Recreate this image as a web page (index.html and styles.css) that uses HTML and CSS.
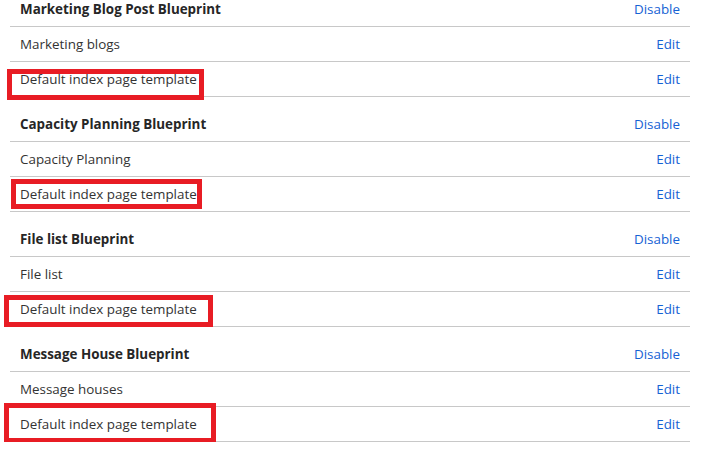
FILE: index.html
```html
<!DOCTYPE html>
<html>
<head>
<meta charset="utf-8">
<link rel="stylesheet" href="styles.css">
</head>
<body>
<div class="list">
  <div class="row head"><span class="title">Marketing Blog Post Blueprint</span><a class="link">Disable</a></div>
  <div class="row"><span class="label">Marketing blogs</span><a class="link">Edit</a></div>
  <div class="row"><span class="label">Default index page template</span><a class="link">Edit</a><span class="mark mark-1"></span></div>

  <div class="row head"><span class="title">Capacity Planning Blueprint</span><a class="link">Disable</a></div>
  <div class="row"><span class="label">Capacity Planning</span><a class="link">Edit</a></div>
  <div class="row"><span class="label">Default index page template</span><a class="link">Edit</a><span class="mark mark-2"></span></div>

  <div class="row head"><span class="title">File list Blueprint</span><a class="link">Disable</a></div>
  <div class="row"><span class="label">File list</span><a class="link">Edit</a></div>
  <div class="row"><span class="label">Default index page template</span><a class="link">Edit</a><span class="mark mark-3"></span></div>

  <div class="row head"><span class="title">Message House Blueprint</span><a class="link">Disable</a></div>
  <div class="row"><span class="label">Message houses</span><a class="link">Edit</a></div>
  <div class="row"><span class="label">Default index page template</span><a class="link">Edit</a><span class="mark mark-4"></span></div>
</div>
</body>
</html>
```

FILE: styles.css
```css
html, body {
  margin: 0;
  padding: 0;
  background: #ffffff;
}
body {
  font-family: "Open Sans", "Noto Sans", "Liberation Sans", sans-serif;
  font-size: 13.4px;
  color: #333333;
  overflow: hidden;
}
.list {
  width: 680px;
  margin: -18px 0 0 10px;
}
.row {
  position: relative;
  display: flex;
  justify-content: space-between;
  align-items: center;
  height: 34px;
  padding: 0 10px;
  border-bottom: 1px solid #c8c8c8;
}
.row.head {
  height: 44px;
  align-items: flex-end;
  padding-bottom: 0;
}
.row.head > * {
  line-height: 20px;
  margin-bottom: 7px;
}
.title {
  font-weight: 700;
  color: #262626;
}
.label {
  color: #333333;
}
.link {
  color: #1662d4;
  cursor: pointer;
}
.mark {
  position: absolute;
  border: 5px solid #e81c24;
  pointer-events: none;
}
.mark-1 { left: -3px; width: 187px; top: 7px; height: 21px; }
.mark-2 { left: 1px; width: 181px; top: 2px; height: 20px; }
.mark-3 { left: -6px; width: 199px; top: 3px; height: 22px; }
.mark-4 { left: -6px; width: 202px; top: -4px; height: 30px; }
```
